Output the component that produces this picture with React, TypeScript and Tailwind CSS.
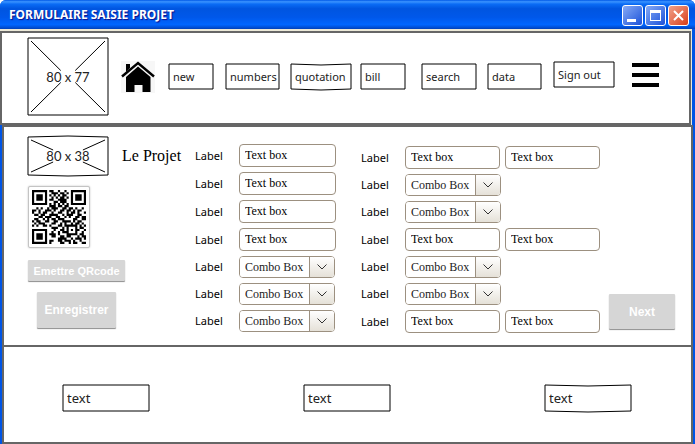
import React from "react";

const sketchFont = "font-['Comic_Sans_MS','Noto_Sans',sans-serif]";
const serifFont = "font-['Liberation_Serif',serif]";

/* Hand-drawn outline; top and bottom bend those edges, positive values downwards. */
function Outline({ w, h, top = 0, bottom = 0 }: { w: number; h: number; top?: number; bottom?: number }) {
  return (
    <svg
      className="pointer-events-none absolute inset-0 h-full w-full overflow-visible"
      viewBox={`0 0 ${w} ${h}`}
      preserveAspectRatio="none"
      fill="none"
      stroke="#000"
      aria-hidden="true"
    >
      <path d={`M1 1Q${w / 2} ${1 + top} ${w - 1} 1V${h - 1}Q${w / 2} ${h - 1 + bottom} 1 ${h - 1}Z`} />
    </svg>
  );
}

function NavButton({ label, width, w, top, bottom }: { label: string; width: string; w: number; top?: number; bottom?: number }) {
  return (
    <button type="button" className={`relative h-[27px] ${width} pl-[5px] text-left text-[11px] leading-[16px] whitespace-nowrap text-[#222] ${sketchFont}`}>
      <Outline w={w} h={27} top={top} bottom={bottom} />
      {label}
    </button>
  );
}

function Placeholder({ w, h, size, label, bow = 0 }: { w: number; h: number; size: string; label: string; bow?: number }) {
  const cx = w / 2;
  const cy = h / 2;
  const gap = 6;
  const dx = (gap * (w - 8)) / (h - 8) + 1;
  return (
    <div className={`relative flex items-center justify-center ${size}`}>
      <Outline w={w} h={h} top={-bow} bottom={bow} />
      <svg className="absolute inset-0 h-full w-full" viewBox={`0 0 ${w} ${h}`} stroke="#000" aria-hidden="true">
        <path d={`M4 4L${cx - dx} ${cy - gap}M${w - 4} 4L${cx + dx} ${cy - gap}M4 ${h - 4}L${cx - dx} ${cy + gap}M${w - 4} ${h - 4}L${cx + dx} ${cy + gap}`} />
      </svg>
      <span className="relative font-['Lato',sans-serif] text-[13px] leading-[16px] text-[#222]">{label}</span>
    </div>
  );
}

const qrRows = [
  "1111111011001001001111111",
  "1000001001110110101000001",
  "1011101010101011001011101",
  "1011101001010110101011101",
  "1011101011001111001011101",
  "1000001000110111001000001",
  "1111111010101010101111111",
  "0000000011101101100000000",
  "0010100101110011011010010",
  "1101001110100110110101100",
  "1001011001001100101101001",
  "0110110011110010111001100",
  "0001101110011001010011011",
  "0110010101101110000110011",
  "1011001100110011110101100",
  "0101110001100101001011010",
  "1010011010001101111110101",
  "0000000001110010100010110",
  "1111111000100110101011001",
  "1000001001001011100010010",
  "1011101011101000111110110",
  "1011101001100110110001011",
  "1011101000001111001011101",
  "1000001011001101110100100",
  "1111111010000110010110011",
];

function QrCode() {
  return (
    <div className="ml-px w-[62px] rounded-[2px] border border-[#c4c4c4] bg-white p-[3px] shadow-[0_0_2px_rgba(0,0,0,0.25)]">
      <svg className="block h-[54px] w-[54px]" viewBox="0 0 25 25" role="img" aria-label="QR code">
        <path
          d={qrRows
            .flatMap((row, y) => [...row].map((c, x) => (c === "1" ? `M${x} ${y}h1v1h-1z` : "")))
            .join("")}
        />
      </svg>
    </div>
  );
}

function GreyButton({ label, box }: { label: string; box: string }) {
  return (
    <button
      type="button"
      className={`rounded-[1px] bg-[#d6d6d6] text-center font-['Liberation_Sans',sans-serif] font-bold whitespace-nowrap text-white shadow-[0_1px_1px_rgba(0,0,0,0.45)] ${box}`}
    >
      {label}
    </button>
  );
}

function TextBox({ id, width }: { id: string; width: string }) {
  return (
    <input
      id={id}
      aria-label={id}
      defaultValue="Text box"
      className={`h-[23px] ${width} rounded-[4px] border border-[#9c9080] bg-white px-[5px] text-[12px] leading-[16px] text-black outline-none ${serifFont}`}
    />
  );
}

function Combo({ id }: { id: string }) {
  return (
    <div className="relative h-[22px] w-[96px] overflow-hidden rounded-[4px] border border-[#9c9080] bg-white">
      <select id={id} className={`block h-full w-full appearance-none bg-white pl-[5px] text-[12px] leading-[16px] text-[#222] outline-none ${serifFont}`}>
        <option>Combo Box</option>
      </select>
      <span className="pointer-events-none absolute inset-y-0 right-0 flex w-[25px] items-center justify-center border-l border-[#9c9080] bg-linear-to-b from-white to-[#e5e1d8]">
        <svg width="10" height="6" viewBox="0 0 10 6" fill="none" stroke="#333" aria-hidden="true">
          <path d="M.5 .5L5 5L9.500 .5" />
        </svg>
      </span>
    </div>
  );
}

type Row = "text" | "combo" | "pair";

function Fields({ prefix, rows, first, className }: { prefix: string; rows: Row[]; first: string; className: string }) {
  return (
    <div className={`flex flex-col gap-[5px] ${className}`}>
      {rows.map((kind, i) => {
        const id = `${prefix}${i + 1}`;
        return (
          <div key={id} className="flex items-center">
            <label htmlFor={id} className="w-[44px] shrink-0 font-['Noto_Sans',sans-serif] text-[11px] leading-[16px] text-black">
              Label
            </label>
            {kind === "combo" ? (
              <Combo id={id} />
            ) : (
              <div className="flex gap-[5px]">
                <TextBox id={id} width={first} />
                {kind === "pair" && <TextBox id={`${id}b`} width="w-[95px]" />}
              </div>
            )}
          </div>
        );
      })}
    </div>
  );
}

const windowButton = "flex h-[21px] w-[21px] items-center justify-center rounded-[3px] border border-white";

function TitleBar() {
  return (
    <header className="flex h-[29px] items-center justify-between rounded-t-[6px] bg-[linear-gradient(180deg,#0058e6_0%,#3a93ff_6%,#0a6cf5_14%,#0055e0_30%,#0058ea_60%,#0066ff_85%,#0050d8_94%,#0040b8_100%)] pr-[6px] pl-[9px]">
      <h1 className="font-['Trebuchet_MS','Noto_Sans',sans-serif] text-[12px] leading-[16px] font-bold text-white [text-shadow:1px_1px_1px_#0f1089]">
        FORMULAIRE SAISIE PROJET
      </h1>
      <div className="flex gap-[2px] pt-[2px]">
        <button type="button" aria-label="Minimize" className={`${windowButton} bg-linear-to-br from-[#86a9f5] to-[#1c4fd8]`}>
          <svg width="19" height="19" viewBox="0 0 19 19" aria-hidden="true">
            <path d="M4 13h9v3H4z" fill="#fff" />
          </svg>
        </button>
        <button type="button" aria-label="Maximize" className={`${windowButton} bg-linear-to-br from-[#86a9f5] to-[#1c4fd8]`}>
          <svg width="19" height="19" viewBox="0 0 19 19" aria-hidden="true">
            <path d="M4 4h11v11H4zM5 7v7h9V7z" fill="#fff" fillRule="evenodd" />
          </svg>
        </button>
        <button type="button" aria-label="Close" className={`${windowButton} bg-linear-to-br from-[#f0a088] to-[#d8380c]`}>
          <svg width="19" height="19" viewBox="0 0 19 19" stroke="#fff" strokeWidth="2" aria-hidden="true">
            <path d="M5 5L14 14M14 5L5 14" />
          </svg>
        </button>
      </div>
    </header>
  );
}

export default function App() {
  return (
    <div className="bg-white">
      <div className="flex min-h-screen flex-col rounded-t-[6px] bg-[#0055e5] pb-px">
        <TitleBar />
        <div className="mr-[3px] bg-[#ece9d8] pt-[2px] pr-px">
          <nav className="grid grid-cols-[94fr_47fr_57fr_65fr_70fr_61fr_66fr_202fr] items-center border-2 border-[#666] bg-white pt-[4px] pb-[7px] pl-[25px]">
            <Placeholder w={82} h={79} size="h-[79px] w-[82px]" label="80 x 77" />
            <button type="button" aria-label="Home" className="h-[32px] w-[34px] bg-[#f7f7f7]">
              <svg className="block" width="34" height="32" viewBox="0 0 34 32" aria-hidden="true">
                <path d="M5 3h4v4l-4 4z" />
                <path d="M1 15.500L17 2L33 15.500" fill="none" stroke="#000" strokeWidth="2.400" />
                <path d="M17 5.500L29.500 16V31H21.500V24H13.500V31H5V16z" />
              </svg>
            </button>
            <NavButton label="new" width="w-[46px]" w={46} />
            <NavButton label="numbers" width="w-[55px]" w={55} />
            <NavButton label="quotation" width="w-[62px]" w={62} top={2} bottom={2} />
            <NavButton label="bill" width="w-[46px]" w={46} />
            <NavButton label="search" width="w-[56px]" w={56} />
            <div className="grid grid-cols-[66fr_79fr_57fr] items-center">
              <NavButton label="data" width="w-[55px]" w={55} />
              <div className="pb-[4px]">
                <NavButton label="Sign out" width="w-[62px]" w={62} />
              </div>
              <div className="pb-[4px]">
                <button type="button" aria-label="Menu" className="flex w-[27px] flex-col gap-[6px]">
                  <span className="h-[4px] w-full bg-black" />
                  <span className="h-[4px] w-full bg-black" />
                  <span className="h-[4px] w-full bg-black" />
                </button>
              </div>
            </div>
          </nav>
        </div>

        <form className="mr-[2px] ml-[2px] flex items-start border-2 border-[#666] bg-white pt-[9px] pb-[12px] pl-[23px]" onSubmit={(e) => e.preventDefault()}>
          <div className="grow-1 basis-[168px]">
            <div className="flex items-center gap-[13px]">
              <Placeholder w={82} h={40} size="h-[40px] w-[82px]" label="80 x 38" bow={2} />
              <h2 className={`text-[16px] leading-[20px] whitespace-nowrap text-black ${serifFont}`}>Le Projet</h2>
            </div>
            <div className="mt-[10px] flex flex-col items-start">
              <QrCode />
              <div className="mt-[12px] flex flex-col items-center gap-[11px] pl-px">
                <GreyButton label="Emettre QRcode" box="h-[21px] w-[97px] text-[11px] leading-[16px]" />
                <GreyButton label="Enregistrer" box="h-[36px] w-[79px] text-[12px] leading-[16px]" />
              </div>
            </div>
          </div>
          <Fields prefix="a" className="grow-1 basis-[166px] pt-[8px]" first="w-[97px]" rows={["text", "text", "text", "text", "combo", "combo", "combo"]} />
          <Fields prefix="b" className="grow-1 basis-[248px] pt-[10px]" first="w-[95px]" rows={["pair", "combo", "combo", "pair", "combo", "combo", "pair"]} />
          <div className="mr-[16px] self-end pb-[4px]">
            <GreyButton label="Next" box="h-[35px] w-[66px] text-[12px] leading-[16px]" />
          </div>
        </form>

        <footer className="mr-[2px] ml-[2px] grid flex-1 grid-cols-[241fr_241fr_147fr] items-start border-2 border-t-0 border-[#666] bg-white pt-[37px] pb-[30px] pl-[58px]">
          {[0, 0, 2].map((bow, i) => (
            <div key={i} className="relative h-[28px] w-[88px]">
              <Outline w={88} h={28} top={bow} bottom={bow} />
              <input aria-label={`Footer text ${i + 1}`} defaultValue="text" className={`h-full w-full bg-transparent px-[5px] text-[13px] leading-[16px] text-[#222] outline-none ${sketchFont}`} />
            </div>
          ))}
        </footer>
      </div>
    </div>
  );
}
